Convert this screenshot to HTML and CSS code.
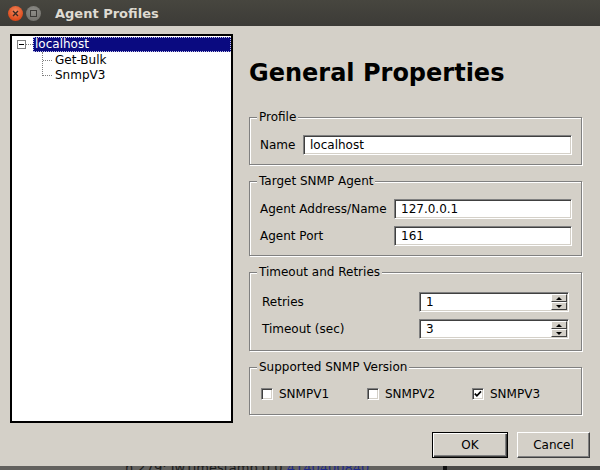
FILE: index.html
```html
<!DOCTYPE html>
<html>
<head>
<meta charset="utf-8">
<link rel="stylesheet" href="styles.css">
</head>
<body>
<div class="window">
  <div class="titlebar">
    <span class="wbtn close"><svg width="7" height="7" viewBox="0 0 7 7"><path d="M1 1L6 6M6 1L1 6" stroke="#3a2a22" stroke-width="1.4"/></svg></span>
    <span class="wbtn max"><span class="sq"></span></span>
    <span class="title">Agent Profiles</span>
  </div>
  <div class="content">
    <div class="main">
      <div class="tree">
        <div class="root">
          <span class="exp"><span class="minus"></span></span>
          <span class="conn"></span>
          <span class="sel">localhost</span>
        </div>
        <div class="children">
          <div class="child">Get-Bulk</div>
          <div class="child">SnmpV3</div>
        </div>
      </div>
      <div class="props">
        <h1 class="heading">General Properties</h1>
        <fieldset class="group g1">
          <legend>Profile</legend>
          <div class="fs-body">
            <span class="lbl">Name</span>
            <div class="field">localhost</div>
          </div>
        </fieldset>
        <fieldset class="group g2">
          <legend>Target SNMP Agent</legend>
          <div class="fs-body">
            <span class="lbl">Agent Address/Name</span>
            <div class="field">127.0.0.1</div>
            <span class="lbl">Agent Port</span>
            <div class="field">161</div>
          </div>
        </fieldset>
        <fieldset class="group g3">
          <legend>Timeout and Retries</legend>
          <div class="fs-body">
            <span class="lbl">Retries</span>
            <div class="field spin"><span class="val">1</span><span class="arrows"><span class="ab up"></span><span class="ab down"></span></span></div>
            <span class="lbl">Timeout (sec)</span>
            <div class="field spin"><span class="val">3</span><span class="arrows"><span class="ab up"></span><span class="ab down"></span></span></div>
          </div>
        </fieldset>
        <fieldset class="group g4">
          <legend>Supported SNMP Version</legend>
          <div class="fs-body">
            <span class="check"><span class="cb"></span>SNMPV1</span>
            <span class="check"><span class="cb"></span>SNMPV2</span>
            <span class="check"><span class="cb"><svg width="8" height="8" viewBox="0 0 8 8"><path d="M0.8 3.6L2.9 5.8L7 1.4" fill="none" stroke="#000" stroke-width="1.7"/></svg></span>SNMPV3</span>
          </div>
        </fieldset>
      </div>
    </div>
    <div class="buttons">
      <span class="btn default">OK</span>
      <span class="btn">Cancel</span>
    </div>
  </div>
</div>
<div class="below">
  <span class="btxt">n 279: IwTimestamp.0.0 <span class="blue">4140400840</span></span>
  <span class="bbar"></span>
  <span class="brest"></span>
</div>
</body>
</html>
```
FILE: styles.css
```css
* { box-sizing: border-box; }
html, body { margin: 0; padding: 0; }
body {
  width: 600px;
  height: 470px;
  overflow: hidden;
  background: #5a5957;
  font-family: "DejaVu Sans", sans-serif;
  font-size: 12px;
  color: #000;
}
.window {
  height: 466px;
  background: #d4d0c8;
  display: flex;
  flex-direction: column;
}
.titlebar {
  height: 26px;
  flex: none;
  background: linear-gradient(#47463f, #3c3b37);
  display: flex;
  align-items: center;
  padding-left: 8px;
  padding-top: 1px;
}
.wbtn {
  width: 15px;
  height: 15px;
  border-radius: 50%;
  display: flex;
  align-items: center;
  justify-content: center;
}
.wbtn.close {
  background: radial-gradient(circle at 50% 35%, #f3875c, #dc4b1c 70%, #b83a12);
}
.wbtn.max {
  margin-left: 3px;
  background: radial-gradient(circle at 50% 35%, #8e8d88, #75746f 75%);
}
.wbtn .sq {
  width: 7px;
  height: 7px;
  border: 1px solid #3a3936;
}
.title {
  margin-left: 14px;
  font-weight: bold;
  font-size: 13px;
  color: #dfdbd2;
}
.content {
  flex: 1;
  padding: 8px 10px 9px 10px;
  display: flex;
  flex-direction: column;
}
.main {
  display: flex;
  gap: 16px;
}
.tree {
  width: 223px;
  height: 389px;
  flex: none;
  background: #fff;
  border: 2px solid #000;
  padding-top: 1px;
}
.root {
  height: 15px;
  display: flex;
  align-items: center;
  padding-left: 5px;
}
.exp {
  width: 9px;
  height: 9px;
  border: 1px solid #808080;
  display: flex;
  align-items: center;
  justify-content: center;
  flex: none;
}
.minus {
  width: 5px;
  height: 1px;
  background: #000;
}
.conn {
  width: 7px;
  border-top: 1px dotted #808080;
  flex: none;
}
.sel {
  flex: 1;
  height: 15px;
  background: #0a0a80;
  color: #fff;
  border: 1px dotted #c0c0e8;
  padding-left: 1px;
  line-height: 13px;
}
.children {
  margin-top: 1px;
}
.child {
  height: 15px;
  line-height: 15px;
  padding-left: 43px;
  position: relative;
}
.child::before {
  content: "";
  position: absolute;
  left: 30px;
  top: -1px;
  bottom: 0;
  border-left: 1px dotted #808080;
}
.child:last-child::before {
  bottom: 7px;
}
.child::after {
  content: "";
  position: absolute;
  left: 31px;
  top: 7px;
  width: 9px;
  border-top: 1px dotted #808080;
}
.props {
  width: 334px;
  flex: none;
}
.heading {
  margin: 25px 0 23px 0;
  font-size: 24px;
  line-height: 28px;
  font-weight: bold;
}
.group {
  width: 333px;
  margin: 0 0 9px 0;
  padding: 0;
  border: 1px solid #808080;
  box-shadow: inset 1px 1px 0 #fff, 1px 1px 0 #fff;
  min-width: 0;
}
.group legend {
  margin-left: 7px;
  padding: 0 2px;
  line-height: 14px;
  background: #d4d0c8;
}
.fs-body {
  display: grid;
  row-gap: 7px;
  align-items: center;
}
.g1 .fs-body { grid-template-columns: 43px 269px; padding: 11px 0 9px 10px; }
.g2 .fs-body { grid-template-columns: 134px 178px; padding: 11px 0 9px 10px; }
.g3 .fs-body { grid-template-columns: 157px 150px; padding: 13px 0 11px 12px; }
.g4 .fs-body { grid-template-columns: 106px 105px auto; padding: 12px 0 12px 11px; }
.field {
  height: 20px;
  background: #fff;
  border: 1px solid;
  border-color: #808080 #fff #fff #808080;
  box-shadow: inset 1px 1px 0 #404040, inset -1px -1px 0 #d4d0c8;
  padding-left: 6px;
  display: flex;
  align-items: center;
}
.spin {
  padding: 1px 1px 1px 6px;
}
.spin .val { flex: 1; }
.arrows {
  width: 16px;
  height: 16px;
  display: flex;
  flex-direction: column;
}
.ab {
  height: 8px;
  background: #d4d0c8;
  border: 1px solid;
  border-color: #fff #404040 #404040 #fff;
  display: flex;
  align-items: center;
  justify-content: center;
}
.ab::after {
  content: "";
  border-left: 3px solid transparent;
  border-right: 3px solid transparent;
}
.ab.up::after { border-bottom: 3px solid #000; }
.ab.down::after { border-top: 3px solid #000; }
.check {
  display: flex;
  align-items: center;
  height: 16px;
  gap: 6px;
}
.cb {
  width: 12px;
  height: 12px;
  flex: none;
  background: #fff;
  border: 1px solid;
  border-color: #808080 #fff #fff #808080;
  box-shadow: inset 1px 1px 0 #404040, inset -1px -1px 0 #d4d0c8;
  display: flex;
  align-items: center;
  justify-content: center;
}
.buttons {
  margin-top: 8px;
  display: flex;
  justify-content: flex-end;
  gap: 9px;
}
.btn {
  height: 26px;
  width: 73px;
  display: flex;
  align-items: center;
  justify-content: center;
  background: #d4d0c8;
  border: 1px solid;
  border-color: #fff #404040 #404040 #fff;
  box-shadow: inset -1px -1px 0 #808080;
}
.btn.default {
  width: 76px;
  border-color: #000;
  box-shadow: inset 1px 1px 0 #fff, inset -1px -1px 0 #404040, inset -2px -2px 0 #808080;
}
.below {
  height: 4px;
  overflow: hidden;
  display: flex;
}
.btxt {
  width: 443px;
  flex: none;
  padding-left: 125px;
  margin-top: -5px;
  line-height: 14px;
  font-size: 13px;
  color: #1a1a1a;
  background: #62615e;
  white-space: nowrap;
}
.blue { color: #1e2a8a; }
.bbar { width: 4px; background: #111; flex: none; }
.brest { flex: 1; background: #4b4a48; }
```
